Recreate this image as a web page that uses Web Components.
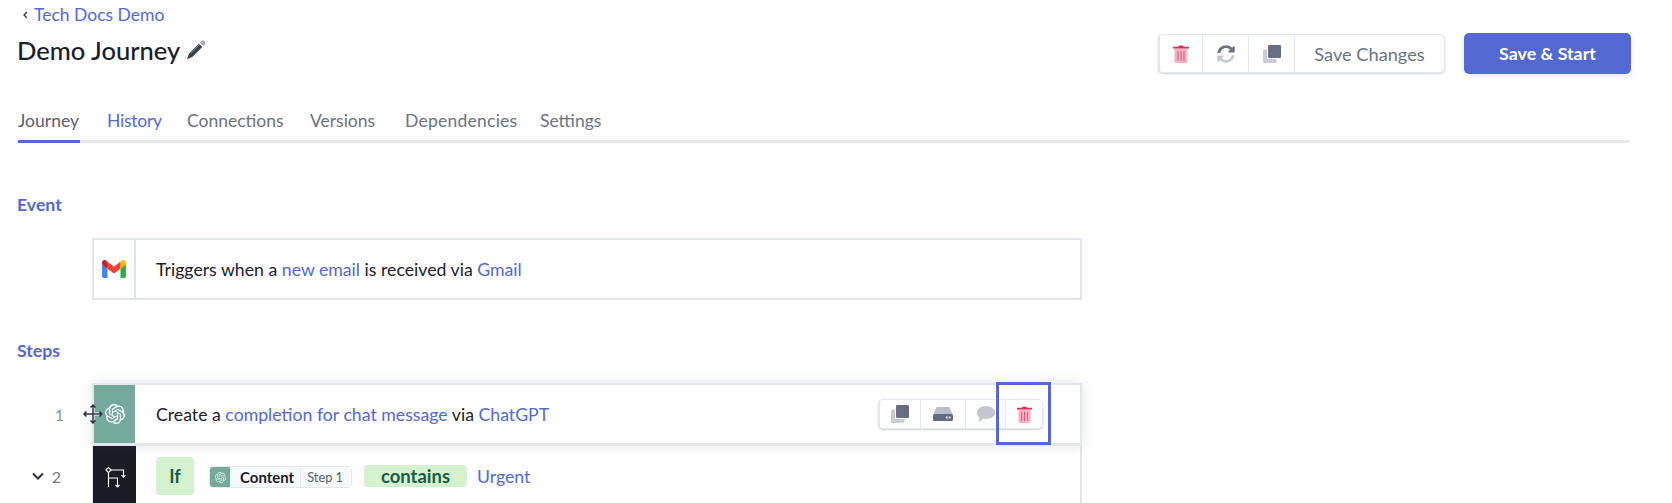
<!DOCTYPE html>
<html><head><meta charset="utf-8">
<style>
html,body{margin:0;padding:0;background:#fff}
body{height:503px;overflow:hidden;font-family:Lato,"Liberation Sans",sans-serif;color:#1c1c2b}
</style></head><body>
<journey-page>
  <back-link>Tech Docs Demo</back-link>
  <journey-head title-text="Demo Journey"></journey-head>
  <tab-bar></tab-bar>
  <section-label style="margin-top:52px">Event</section-label>
  <flow-row style="margin-top:23px" kind="event" height="62">
    <span>Triggers when a <a-link>new email</a-link> is received via <a-link>Gmail</a-link></span>
  </flow-row>
  <section-label style="margin-top:41px">Steps</section-label>
  <flow-row style="margin-top:22px" kind="gpt" num="1" height="63" active>
    <span>Create a <a-link>completion for chat message</a-link> via <a-link>ChatGPT</a-link></span>
  </flow-row>
  <flow-row kind="branch" num="2" chevron height="60">
    <if-condition></if-condition>
  </flow-row>
</journey-page>
<script>
const ICONS = {
  trash:(w,h)=>`<svg width="${w}" height="${h}" viewBox="0 0 16 18"><path fill="#f2b3c3" d="M1.500 3.600h13v12.900a1.500 1.500 0 0 1-1.500 1.500H3a1.500 1.500 0 0 1-1.500-1.500z"/><path fill="#d2305f" d="M0 1.800h5.200L6 .6h4l.8 1.200H16v1.800H0z"/><path fill="#dd4f78" d="M4.500 6.200h1v9.600h-1zM7.500 6.200h1v9.600h-1zM10.500 6.200h1v9.600h-1z"/></svg>`,
  sync:`<svg width="18" height="18" viewBox="0 0 512 512"><path fill="#6b7285" d="M370.72 133.28C339.458 104.008 298.888 87.962 255.848 88c-77.458.068-144.328 53.178-162.791 126.85-1.344 5.363-6.122 9.15-11.651 9.15H24.103c-7.498 0-13.194-6.807-11.807-14.176C33.933 94.924 134.813 8 256 8c66.448 0 126.791 26.136 171.315 68.685L463.03 40.97C478.149 25.851 504 36.559 504 57.941V192c0 13.255-10.745 24-24 24H345.941c-21.382 0-32.09-25.851-16.971-40.971l41.75-41.749z"/><path fill="#c6c9d1" d="M32 296h134.059c21.382 0 32.09 25.851 16.971 40.971l-41.75 41.75c31.262 29.273 71.835 45.319 114.876 45.28 77.418-.07 144.315-53.144 162.787-126.849 1.344-5.363 6.122-9.15 11.651-9.15h57.304c7.498 0 13.194 6.807 11.807 14.176C478.067 417.076 377.187 504 256 504c-66.448 0-126.791-26.136-171.315-68.685L48.97 471.03C33.851 486.149 8 475.441 8 454.059V320c0-13.255 10.745-24 24-24z"/></svg>`,
  copy:`<svg width="18" height="18" viewBox="0 0 18 18"><path fill="#c9cbd3" d="M1.500 4.500H4V14h9.500v2.500a1.500 1.500 0 0 1-1.500 1.500H1.500A1.500 1.500 0 0 1 0 16.500V6a1.500 1.500 0 0 1 1.500-1.500z"/><rect x="5" y="0" width="13" height="13" rx="1.200" fill="#686e82"/></svg>`,
  hdd:`<svg width="20" height="14" viewBox="0 0 20 14"><path fill="#b9bdc7" d="M4.500 0h11c.6 0 1 .3 1.300.8L19.500 7H.5L3.200.8C3.500.3 3.900 0 4.500 0z"/><path fill="#646b7f" fill-rule="evenodd" d="M1.500 7h17A1.500 1.500 0 0 1 20 8.500v4a1.500 1.500 0 0 1-1.500 1.500h-17A1.500 1.500 0 0 1 0 12.500v-4A1.500 1.500 0 0 1 1.500 7zM13 9.500v2h1.600v-2zM15.800 9.500v2h1.600v-2z"/></svg>`,
  comment:`<svg width="18" height="16" viewBox="0 0 18 16"><path fill="#c3c6ce" d="M9 0c5 0 9 2.900 9 6.500S14 13 9 13c-1 0-2-.1-2.900-.4C4.800 14 3 15.300.6 15.700c1.100-1.200 1.900-2.500 2.100-3.900C1 10.600 0 8.700 0 6.500 0 2.900 4 0 9 0z"/></svg>`,
  gpt:(s,c)=>`<svg width="${s}" height="${s}" viewBox="0 0 24 24"><path fill="${c}" d="M22.2819 9.8211a5.9847 5.9847 0 0 0-.5157-4.9108 6.0462 6.0462 0 0 0-6.5098-2.9A6.0651 6.0651 0 0 0 4.9807 4.1818a5.9847 5.9847 0 0 0-3.9977 2.9 6.0462 6.0462 0 0 0 .7427 7.0966 5.98 5.98 0 0 0 .511 4.9107 6.051 6.051 0 0 0 6.5146 2.9001A5.9847 5.9847 0 0 0 13.2599 24a6.0557 6.0557 0 0 0 5.7718-4.2058 5.9894 5.9894 0 0 0 3.9977-2.9001 6.0557 6.0557 0 0 0-.7475-7.0729zm-9.022 12.6081a4.4755 4.4755 0 0 1-2.8764-1.0408l.1419-.0804 4.7783-2.7582a.7948.7948 0 0 0 .3927-.6813v-6.7369l2.02 1.1686a.071.071 0 0 1 .038.052v5.5826a4.504 4.504 0 0 1-4.4945 4.4944zm-9.6607-4.1254a4.4708 4.4708 0 0 1-.5346-3.0137l.142.0852 4.783 2.7582a.7712.7712 0 0 0 .7806 0l5.8428-3.3685v2.3324a.0804.0804 0 0 1-.0332.0615L9.74 19.9502a4.4992 4.4992 0 0 1-6.1408-1.6464zM2.3408 7.8956a4.485 4.485 0 0 1 2.3655-1.9728V11.6a.7664.7664 0 0 0 .3879.6765l5.8144 3.3543-2.0201 1.1685a.0757.0757 0 0 1-.071 0l-4.8303-2.7865A4.504 4.504 0 0 1 2.3408 7.872zm16.5963 3.8558L13.1038 8.364 15.1192 7.2a.0757.0757 0 0 1 .071 0l4.8303 2.7913a4.4944 4.4944 0 0 1-.6765 8.1042v-5.6772a.79.79 0 0 0-.407-.667zm2.0107-3.0231l-.142-.0852-4.7735-2.7818a.7759.7759 0 0 0-.7854 0L9.409 9.2297V6.8974a.0662.0662 0 0 1 .0284-.0615l4.8303-2.7866a4.4992 4.4992 0 0 1 6.6802 4.66zM8.3065 12.863l-2.02-1.1638a.0804.0804 0 0 1-.038-.0567V6.0742a4.4992 4.4992 0 0 1 7.3757-3.4537l-.142.0805L8.704 5.459a.7948.7948 0 0 0-.3927.6813zm1.0976-2.3654l2.602-1.4998 2.6069 1.4998v2.9994l-2.5974 1.4997-2.6067-1.4997Z"/></svg>`,
  gmail:`<svg width="24" height="18" viewBox="0 0 256 193"><path fill="#4285F4" d="M58.182 192.05V93.14L27.507 65.077 0 49.504v125.091c0 9.658 7.825 17.455 17.455 17.455h40.727Z"/><path fill="#34A853" d="M197.818 192.05h40.727c9.659 0 17.455-7.826 17.455-17.455V49.505l-31.156 17.837-27.026 25.798v98.91Z"/><path fill="#EA4335" d="m58.182 93.14-4.174-38.647 4.174-36.989L128 69.868l69.818-52.364 4.669 34.992-4.669 40.644L128 145.504z"/><path fill="#FBBC04" d="M197.818 17.504V93.14L256 49.504V26.231c0-21.585-24.64-33.89-41.89-20.945l-16.292 13.218Z"/><path fill="#C5221F" d="m0 49.504 26.759 20.07L58.182 93.14V17.504L41.89 5.286C24.61-7.66 0 4.646 0 26.23v23.273Z"/></svg>`,
  branch:`<svg width="24" height="26" viewBox="0 0 24 26" fill="none" stroke="#fff" stroke-width="1.100"><path d="M5.500 7H20.500v7M5.500 7V24M5.500 15h9v9"/><path d="M18.500 12l2 2.200 2-2.200M12.500 21.800l2 2.200 2-2.200"/><rect x="3.700" y="5.200" width="3.600" height="3.600" transform="rotate(45 5.500 7)" fill="#1c1c24"/></svg>`,
  pencil:`<svg width="20" height="20" viewBox="0 0 18 18"><path fill="#a5a8b0" d="M12.600 2.400l1.400-1.400a1.600 1.600 0 0 1 2.200 0l.8.800a1.600 1.600 0 0 1 0 2.200l-1.400 1.400z"/><path fill="#3b4050" d="M11.600 3.400l3 3-9 9L1.200 17c-.2.100-.3 0-.2-.2l1.600-4.400z"/><path stroke="#8d919c" stroke-width=".7" d="M4.500 11.800l7.500-7.500"/></svg>`
};

function define(name, css, html){
  customElements.define(name, class extends HTMLElement{
    connectedCallback(){
      if(this.shadowRoot) return;
      const r=this.attachShadow({mode:'open'});
      r.innerHTML=`<style>${css}</style>${typeof html==='function'?html(this):html}`;
    }
  });
}

define('journey-page',`:host{display:block;padding:0 42px 0 18px;font-family:Lato,"Liberation Sans",sans-serif;font-size:17.700px;position:relative}`,`<slot></slot>`);
define('a-link',`:host{display:inline;color:#5468d4}`,`<slot></slot>`);

define('back-link',`:host{display:flex;align-items:center;height:29px;color:#5468d4;font-size:17.500px;gap:5px;padding-left:4px}
svg{display:block}`,`<svg width="7" height="8" viewBox="0 0 7 8" fill="none" stroke="#333a4d" stroke-width="1.300"><path d="M5 1L2 4l3 3"/></svg><slot></slot>`);

define('journey-head',`:host{display:flex;justify-content:space-between;align-items:flex-start;padding-top:3px;height:71px;box-sizing:border-box;margin-bottom:6px}
.t{display:flex;align-items:center;gap:6px;height:36px;margin-left:-1px}
h1{margin:0;font-size:25.500px;font-weight:500;color:#1c1c2b;line-height:36px}
.r{display:flex;gap:19px;align-items:flex-start;margin-right:-1px;padding-top:1px}
button{all:unset;box-sizing:border-box;width:167px;height:41px;background:#5468d4;color:#fff;font-weight:700;font-size:17.800px;text-align:center;line-height:41px;border-radius:5px;box-shadow:0 2px 5px rgba(84,104,212,.15)}
action-group{margin-top:1px}`,
 el=>`<div class="t"><h1>${el.getAttribute('title-text')}</h1>${ICONS.pencil}</div>
 <div class="r"><action-group variant="top"></action-group><button>Save &amp; Start</button></div>`);

define('action-group',`:host{display:flex;background:#fff;border:1px solid #e3e8ef;border-radius:5px;box-shadow:0 1px 2px rgba(60,66,87,.25);box-sizing:border-box;color:#6b7285;font-size:18.200px}
.c{display:flex;align-items:center;justify-content:center;border-left:1px solid #e3e8ef;box-sizing:border-box;flex:none}
.c:first-child{border-left:0}`,
 el=>{
  if(el.getAttribute('variant')==='top'){
    return `<style>:host{width:287px;height:39px}</style>
    <div class="c" style="width:43px">${ICONS.trash(16,18)}</div><div class="c" style="width:46px">${ICONS.sync}</div><div class="c" style="width:46px">${ICONS.copy}</div><div class="c" style="flex:1">Save Changes</div>`;
  }
  return `<style>:host{width:165px;height:30px}</style>
    <div class="c" style="width:41px">${ICONS.copy}</div><div class="c" style="width:45px">${ICONS.hdd}</div><div class="c" style="width:40px">${ICONS.comment}</div><div class="c" style="flex:1">${ICONS.trash(15,17)}</div>`;
 });

define('tab-bar',`:host{display:flex;box-sizing:border-box;border-bottom:3px solid #e9e9ec;height:37px;color:#6b7285;font-size:17.500px}
.t{display:block;flex:none}
.t span{display:inline-block;height:37px;line-height:30px;box-sizing:border-box}
.a span{border-bottom:3px solid #5468d4;width:62px;color:#5a6072}
.h{color:#5468d4;letter-spacing:-.25px}
.d{letter-spacing:.25px}`,
 `<div class="t a" style="width:89px"><span>Journey</span></div><div class="t h" style="width:80px"><span>History</span></div><div class="t" style="width:123px"><span>Connections</span></div><div class="t" style="width:95px"><span>Versions</span></div><div class="t d" style="width:135px"><span>Dependencies</span></div><div class="t"><span>Settings</span></div>`);

define('section-label',`:host{display:block;height:20px;line-height:20px;color:#5468d4;font-weight:700;font-size:17.700px;margin-left:-1px}`,`<slot></slot>`);

define('flow-row',`:host{display:grid;grid-template-columns:74px 990px;position:relative}
.n{display:flex;align-items:center;justify-content:flex-end;padding-right:31px;gap:8px;color:#6f7a8c;font-size:16px}
.card{display:flex;box-sizing:border-box;border:2px solid #e3e6ea;background:#fff;position:relative}
.ic{width:42px;flex:none;display:flex;align-items:center;justify-content:center;box-sizing:border-box}
.body{display:flex;align-items:center;padding-left:20px;flex:1;color:#1c1c2b}
:host([kind=event]) .card{border-color:#e1e6ec}
:host([kind=event]) .ic{border-right:2px solid #dde6ef}
:host([kind=gpt]) .card{box-shadow:0 0 12px rgba(60,66,87,.14);border-bottom-width:3px;z-index:1}
:host([kind=gpt]) .ic{background:#74aa9c;width:41px}
:host([kind=gpt]) .body{padding-left:21px}
:host([kind=gpt]) .n{color:#7d9a7e;padding-right:28px}
:host([kind=branch]) .card{border-top:0;border-bottom:0}
:host([kind=branch]) .ic{background:#1c1c24;margin-left:-1px;width:43px}
.over{position:absolute;right:37px;top:14px}
.mark{position:absolute;left:902px;top:-3px;width:55px;height:63px;border:3px solid #5468d4;box-sizing:border-box;pointer-events:none;z-index:3}
.move{position:absolute;left:-11px;top:19px;z-index:4}
.chev{display:block}`,
 el=>{
  const k=el.getAttribute('kind');
  const ic=k==='event'?ICONS.gmail:k==='gpt'?ICONS.gpt(20,'#fff'):ICONS.branch;
  const num=el.getAttribute('num')||'';
  const chev=el.hasAttribute('chevron')?`<svg class="chev" width="12" height="8" viewBox="0 0 12 8" fill="none" stroke="#2c3146" stroke-width="2"><path d="M1 1.500l5 5 5-5"/></svg>`:'';
  const act=el.hasAttribute('active');
  return `<style>:host{height:${el.getAttribute('height')}px}</style>
  <div class="n">${chev}${num}</div>
  <div class="card"><div class="ic">${ic}</div><div class="body"><slot></slot></div>
  ${act?`<action-group class="over" variant="step"></action-group><div class="mark"></div>
  <svg class="move" width="20" height="20" viewBox="0 0 20 20" fill="none" stroke="#2c3146" stroke-width="1.500" style="overflow:visible"><path d="M10 1v18M1 10h18" stroke="#fff" stroke-width="3"/><path d="M10 1v18M1 10h18M7.500 3.500L10 1l2.500 2.500M7.500 16.500L10 19l2.500-2.500M3.500 7.500L1 10l2.500 2.500M16.500 7.500L19 10l-2.500 2.500"/></svg>`:''}
  </div>`;
 });

define('if-condition',`:host{display:flex;align-items:center;height:60px;box-sizing:border-box}
.if{width:38px;height:38px;border-radius:4px;background:#d5f2cf;color:#1a5c45;font-weight:700;font-size:18px;display:flex;align-items:center;justify-content:center}
.chip{display:flex;align-items:stretch;height:22px;margin-left:15px;border:1px solid #e3e8ef;border-radius:4px;background:#f6f9fc;box-sizing:border-box;width:143px;overflow:hidden;margin-top:2px}
.ci{width:20px;background:#74aa9c;display:flex;align-items:center;justify-content:center;flex:none}
.l{font-weight:700;font-size:15px;line-height:20px;margin-left:10px;color:#1c1c2b}
.s{font-size:12.800px;line-height:20px;border-left:1px solid #e3e8ef;padding-left:6px;margin-left:6px;color:#5a6072;flex:1;background:#f6f9fc}
.op{margin-left:12px;height:22px;width:103px;background:#d5f2cf;color:#1a5c45;font-weight:700;font-size:18.500px;border-radius:4px;display:flex;align-items:center;justify-content:center}
.v{margin-left:10px;color:#5468d4;font-size:17.700px}`,
 `<div class="if">If</div><div class="chip"><div class="ci">${ICONS.gpt(11,'#dfeeea')}</div><div class="l">Content</div><div class="s">Step 1</div></div><div class="op">contains</div><div class="v">Urgent</div>`);
</script>
</body></html>
